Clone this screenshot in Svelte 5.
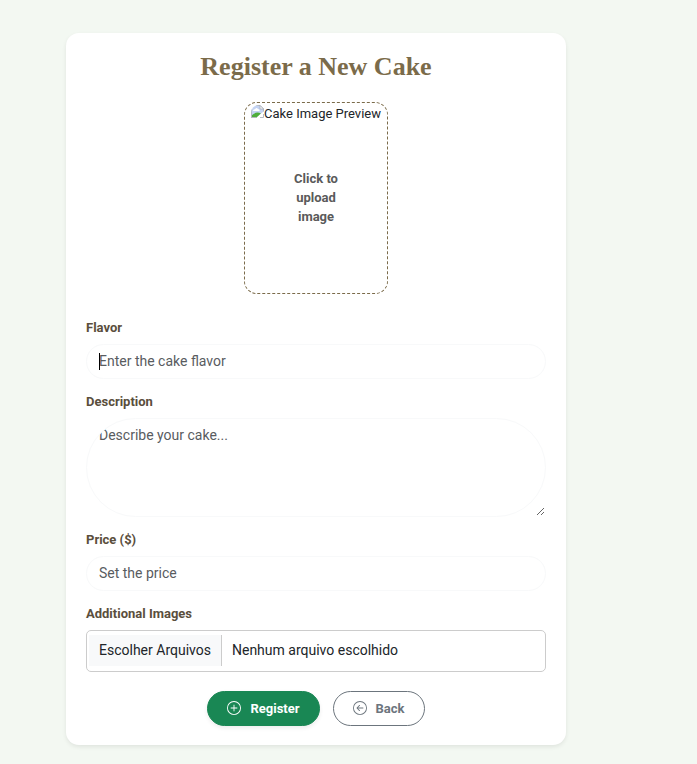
<script>
  let flavor = $state('');
  let description = $state('');
  let price = $state('');
  let files = $state();

  const fileText = $derived(
    files && files.length
      ? Array.from(files, (f) => f.name).join(', ')
      : 'Nenhum arquivo escolhido'
  );
</script>

<main>
  <form class="card" onsubmit={(e) => e.preventDefault()}>
    <h1>Register a New Cake</h1>

    <label class="preview">
      <input class="hidden-file" type="file" accept="image/*" />
      <span class="preview-alt">
        <svg width="13" height="13" viewBox="0 0 13 13" aria-hidden="true">
          <path d="M0 0H9L13 4V13H0Z" fill="#c3d3f3" />
          <path d="M2 6Q2 4 4 4.200Q5.500 2 7 4Q9 4.200 8.500 6Z" fill="#fff" />
          <path d="M0 13V11Q5 5.500 10 8.500L5.500 13Z" fill="#4fae3c" />
          <path d="M5 13 13 6V13Z" fill="#fff" />
          <path d="M0.500 13V0.500H9L12.500 4V6.500" fill="none" stroke="#b4b8c0" />
          <path d="M9 0.500V4H12.500Z" fill="#fff" stroke="#a9adb5" stroke-width="0.800" />
          <path d="M0.500 12.500H5M9 12.500H12.500V9" fill="none" stroke="#b4b8c0" />
        </svg>Cake Image Preview
      </span>
      <span class="preview-hint">Click to upload image</span>
    </label>

    <div class="field">
      <label for="flavor">Flavor</label>
      <div class="control">
        <input id="flavor" type="text" placeholder="Enter the cake flavor" bind:value={flavor} />
        {#if !flavor}<span class="caret" aria-hidden="true"></span>{/if}
      </div>
    </div>

    <div class="field">
      <label for="description">Description</label>
      <textarea id="description" placeholder="Describe your cake..." bind:value={description}></textarea>
    </div>

    <div class="field">
      <label for="price">Price ($)</label>
      <input id="price" type="text" inputmode="decimal" placeholder="Set the price" bind:value={price} />
    </div>

    <div class="field">
      <label for="images">Additional Images</label>
      <label class="file" for="images">
        <input class="hidden-file" id="images" type="file" multiple bind:files />
        <span class="file-button">Escolher Arquivos</span>
        <span class="file-name">{fileText}</span>
      </label>
    </div>

    <div class="actions">
      <button class="register" type="submit">
        <svg width="14" height="14" viewBox="0 0 16 16" fill="currentColor" aria-hidden="true">
          <path d="M8 15A7 7 0 1 1 8 1a7 7 0 0 1 0 14m0 1A8 8 0 1 0 8 0a8 8 0 0 0 0 16" />
          <path d="M8 4a.5.5 0 0 1 .5.5v3h3a.5.5 0 0 1 0 1h-3v3a.5.5 0 0 1-1 0v-3h-3a.5.5 0 0 1 0-1h3v-3A.5.5 0 0 1 8 4" />
        </svg>
        Register
      </button>
      <button class="back" type="button">
        <svg width="14" height="14" viewBox="0 0 16 16" fill="currentColor" aria-hidden="true">
          <path fill-rule="evenodd" d="M1 8a7 7 0 1 0 14 0A7 7 0 0 0 1 8m15 0A8 8 0 1 1 0 8a8 8 0 0 1 16 0m-4.500-.5a.5.5 0 0 1 0 1H5.707l2.147 2.146a.5.5 0 0 1-.708.708l-3-3a.5.5 0 0 1 0-.708l3-3a.5.5 0 1 1 .708.708L5.707 7.500z" />
        </svg>
        Back
      </button>
    </div>
  </form>
</main>

<style>
  :global(body) {
    background: #f3f8f2;
  }

  main {
    display: flex;
    justify-content: center;
    padding: 33px 65px 19px 0;
    font-family: Roboto, 'Liberation Sans', sans-serif;
    font-size: 14px;
    line-height: 21px;
    color: #212529;
  }

  .card,
  .card * {
    box-sizing: border-box;
  }

  .card {
    display: flex;
    flex-direction: column;
    gap: 12px;
    width: 100%;
    max-width: 500px;
    padding: 19px 20px;
    background: #fff;
    border-radius: 13px;
    box-shadow: 0 2px 4px rgba(0, 0, 0, 0.08);
  }

  h1 {
    margin: 0;
    font-family: 'Liberation Serif', serif;
    font-size: 26px;
    line-height: 30px;
    font-weight: 700;
    text-align: center;
    color: #7b6b4a;
  }

  .preview {
    position: relative;
    display: flex;
    align-items: center;
    flex-direction: column;
    align-self: center;
    width: 144px;
    height: 192px;
    margin: 8px 0 11px;
    border: 1px dashed #7b6b4a;
    border-radius: 13px;
    font-size: 13px;
    cursor: pointer;
  }

  .preview-alt {
    display: flex;
    height: 21px;
    white-space: nowrap;
  }

  .preview-alt svg {
    margin-top: 2px;
    border-radius: 8px 0 0 0;
  }

  .preview-hint {
    width: 72px;
    margin-top: 45px;
    line-height: 19px;
    font-weight: 700;
    text-align: center;
    color: #5a5a5a;
  }

  .hidden-file {
    position: absolute;
    width: 1px;
    height: 1px;
    opacity: 0;
  }

  .field {
    display: flex;
    flex-direction: column;
    gap: 5px;
  }

  .field > label:first-child {
    font-size: 13px;
    line-height: 22px;
    font-weight: 700;
    color: #5a4e3c;
  }

  .control {
    position: relative;
    display: flex;
  }

  input[type='text'],
  textarea {
    display: block;
    width: 100%;
    margin: 0;
    padding: 6px 12px;
    border: 1px solid #f8f9fa;
    border-radius: 50px;
    outline: none;
    background: #fff;
    font: inherit;
    color: #212529;
  }

  input[type='text'] {
    height: 35px;
    padding: 5px 12px 7px;
  }

  textarea {
    height: 99px;
    resize: vertical;
  }

  ::placeholder {
    color: #595c5f;
    opacity: 1;
  }

  .caret {
    position: absolute;
    top: 9px;
    left: 13px;
    width: 1px;
    height: 17px;
    background: #000;
  }

  .file {
    position: relative;
    display: flex;
    align-items: center;
    gap: 10px;
    height: 42px;
    padding: 0 2px 1px;
    border: 1px solid #ccc;
    border-radius: 5px;
  }

  .file-button {
    padding: 5px 10px;
    border-right: 1px solid #ccc;
    background: #f8f9fa;
    white-space: nowrap;
  }

  .file-name {
    overflow: hidden;
    text-overflow: ellipsis;
    white-space: nowrap;
  }

  .actions {
    display: flex;
    justify-content: center;
    gap: 13px;
    margin-top: 7px;
  }

  button {
    display: flex;
    align-items: center;
    gap: 9px;
    height: 35px;
    padding: 0 19px;
    border: 1px solid;
    border-radius: 50px;
    font: inherit;
    font-size: 13px;
    font-weight: 700;
    cursor: pointer;
  }

  button svg {
    margin-bottom: 2px;
  }

  .register {
    border-color: #198754;
    background: #198754;
    color: #fff;
    box-shadow: 0 2px 4px rgba(0, 0, 0, 0.08);
  }

  .back {
    border-color: #6c757d;
    background: #fff;
    color: #6c757d;
  }
</style>
